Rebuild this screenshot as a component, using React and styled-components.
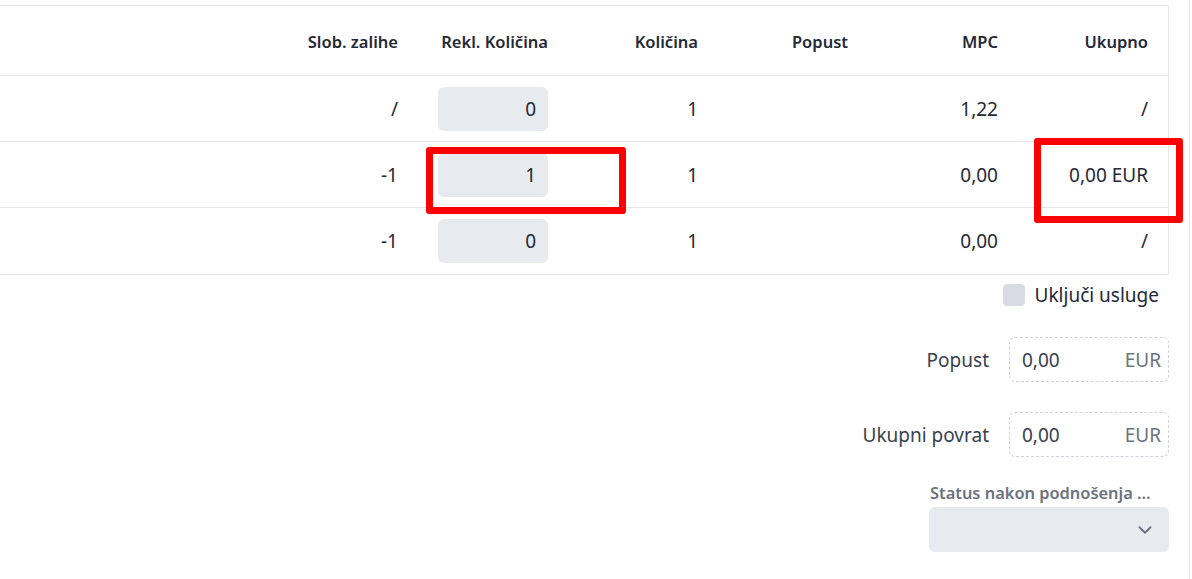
import React from "react";
import styled, { createGlobalStyle } from "styled-components";
import { ChevronDown } from "lucide-react";

const GlobalStyle = createGlobalStyle`
  html, body { margin: 0; padding: 0; background: #ffffff; }
  body { font-family: "Noto Sans", "Open Sans", sans-serif; color: #1f2937; }
  * { box-sizing: border-box; }
`;

const Page = styled.div`
  position: relative;
  width: 1190px;
  height: 579px;
  padding: 5px 20px 0 0;
  border-right: 1px solid #e3e5e8;
  overflow: hidden;
`;

const Table = styled.div`
  display: grid;
  grid-template-columns: 1fr repeat(6, 150px);
  border-top: 1px solid #e5e7eb;
  border-right: 1px solid #e5e7eb;
  border-bottom: 1px solid #e5e7eb;
`;

const HeadCell = styled.div`
  height: 70px;
  border-bottom: 1px solid #e5e7eb;
  display: flex;
  align-items: center;
  justify-content: flex-end;
  padding: 2px 20px 0 0;
  font-size: 16.5px;
  font-weight: 600;
  color: #1f2937;
`;

const Cell = styled.div`
  height: 66px;
  border-bottom: ${(p) => (p.$last ? "none" : "1px solid #e5e7eb")};
  display: flex;
  align-items: center;
  justify-content: flex-end;
  padding: 0 20px 0 0;
  font-size: 19px;
  color: #1f2937;
`;

const QtyInput = styled.div`
  width: 110px;
  height: 44px;
  border-radius: 6px;
  background: #e7eaee;
  display: flex;
  align-items: center;
  justify-content: flex-end;
  padding-right: 12px;
  font-size: 19px;
  color: #1f2937;
`;

const Highlight = styled.div`
  position: absolute;
  left: ${(p) => p.$x}px;
  top: ${(p) => p.$y}px;
  width: ${(p) => p.$w}px;
  height: ${(p) => p.$h}px;
  border: 7px solid #ff0000;
  border-radius: 3px;
  pointer-events: none;
`;

const CheckRow = styled.label`
  display: flex;
  justify-content: flex-end;
  align-items: center;
  gap: 10px;
  margin: 8px 10px 0 0;
  height: 24px;
  font-size: 19px;
  color: #1f2937;
`;

const Box = styled.span`
  width: 22px;
  height: 22px;
  border-radius: 4px;
  background: #d8dce2;
`;

const FormRow = styled.div`
  display: flex;
  justify-content: flex-end;
  align-items: center;
  gap: 20px;
  margin-top: ${(p) => p.$mt}px;
`;

const FieldLabel = styled.span`
  font-size: 19px;
  color: #374151;
`;

const MoneyInput = styled.div`
  width: 160px;
  height: 45px;
  border: 1px dashed #cfd3d9;
  border-radius: 6px;
  display: flex;
  align-items: center;
  justify-content: space-between;
  padding: 0 7px 0 12px;
  font-size: 19px;
  color: #374151;
`;

const Suffix = styled.span`
  color: #6b7280;
`;

const StatusBlock = styled.div`
  display: flex;
  flex-direction: column;
  align-items: flex-start;
  width: 240px;
  margin: 25px 0 0 auto;
`;

const StatusLabel = styled.span`
  font-size: 16.4px;
  font-weight: 600;
  color: #6b7280;
  line-height: 22px;
  margin-left: 1px;
`;

const Select = styled.div`
  margin-top: 3px;
  width: 240px;
  height: 45px;
  border-radius: 6px;
  background: #e7eaee;
  display: flex;
  align-items: center;
  justify-content: flex-end;
  padding-right: 13px;
  color: #6b7280;
`;

const headers = ["", "Slob. zalihe", "Rekl. Količina", "Količina", "Popust", "MPC", "Ukupno"];
const rows = [
  { stock: "/", rekl: "0", qty: "1", disc: "", mpc: "1,22", total: "/" },
  { stock: "-1", rekl: "1", qty: "1", disc: "", mpc: "0,00", total: "0,00 EUR" },
  { stock: "-1", rekl: "0", qty: "1", disc: "", mpc: "0,00", total: "/" },
];

export default function App() {
  return (
    <>
      <GlobalStyle />
      <Page>
        <Table>
          {headers.map((h, i) => (
            <HeadCell key={i}>{h}</HeadCell>
          ))}
          {rows.map((r, i) => {
            const last = i === rows.length - 1;
            return (
              <React.Fragment key={i}>
                <Cell $last={last} />
                <Cell $last={last}>{r.stock}</Cell>
                <Cell $last={last}>
                  <QtyInput>{r.rekl}</QtyInput>
                </Cell>
                <Cell $last={last}>{r.qty}</Cell>
                <Cell $last={last}>{r.disc}</Cell>
                <Cell $last={last}>{r.mpc}</Cell>
                <Cell $last={last}>{r.total}</Cell>
              </React.Fragment>
            );
          })}
        </Table>
        <CheckRow>
          <Box />
          Uključi usluge
        </CheckRow>
        <FormRow $mt={30}>
          <FieldLabel>Popust</FieldLabel>
          <MoneyInput>
            <span>0,00</span>
            <Suffix>EUR</Suffix>
          </MoneyInput>
        </FormRow>
        <FormRow $mt={30}>
          <FieldLabel>Ukupni povrat</FieldLabel>
          <MoneyInput>
            <span>0,00</span>
            <Suffix>EUR</Suffix>
          </MoneyInput>
        </FormRow>
        <StatusBlock>
          <StatusLabel>Status nakon podnošenja ...</StatusLabel>
          <Select>
            <ChevronDown size={22} strokeWidth={2} />
          </Select>
        </StatusBlock>
        <Highlight $x={426} $y={147} $w={200} $h={67} />
        <Highlight $x={1034} $y={138} $w={149} $h={85} />
      </Page>
    </>
  );
}
